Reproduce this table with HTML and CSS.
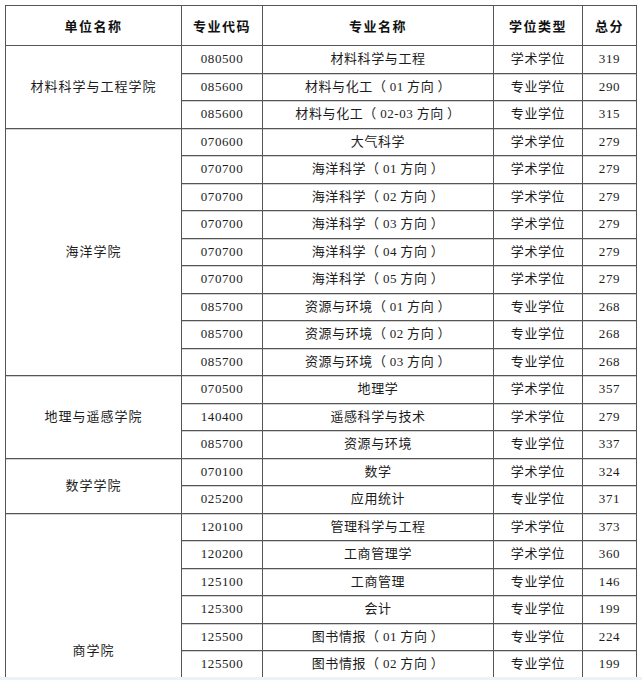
FILE: index.html
```html
<!DOCTYPE html>
<html lang="zh-CN">
<head>
<meta charset="utf-8">
<title>招生专业分数线</title>
<link rel="stylesheet" href="styles.css">
</head>
<body>
<div class="page">
<table class="score-table">
  <colgroup>
    <col class="c-unit"><col class="c-code"><col class="c-name"><col class="c-type"><col class="c-score">
  </colgroup>
  <thead>
    <tr class="head-row">
      <th>单位名称</th><th>专业代码</th><th>专业名称</th><th>学位类型</th><th>总分</th>
    </tr>
  </thead>
  <tbody>
    <tr class="first"><td class="unit" rowspan="3">材料科学与工程学院</td><td class="num">080500</td><td>材料科学与工程</td><td>学术学位</td><td class="num">319</td></tr>
    <tr><td class="num">085600</td><td>材料与化工（&thinsp;01&thinsp;方向&thinsp;）</td><td>专业学位</td><td class="num">290</td></tr>
    <tr><td class="num">085600</td><td>材料与化工（&thinsp;02-03&thinsp;方向&thinsp;）</td><td>专业学位</td><td class="num">315</td></tr>

    <tr><td class="unit" rowspan="9">海洋学院</td><td class="num">070600</td><td>大气科学</td><td>学术学位</td><td class="num">279</td></tr>
    <tr><td class="num">070700</td><td>海洋科学（&thinsp;01&thinsp;方向&thinsp;）</td><td>学术学位</td><td class="num">279</td></tr>
    <tr><td class="num">070700</td><td>海洋科学（&thinsp;02&thinsp;方向&thinsp;）</td><td>学术学位</td><td class="num">279</td></tr>
    <tr><td class="num">070700</td><td>海洋科学（&thinsp;03&thinsp;方向&thinsp;）</td><td>学术学位</td><td class="num">279</td></tr>
    <tr><td class="num">070700</td><td>海洋科学（&thinsp;04&thinsp;方向&thinsp;）</td><td>学术学位</td><td class="num">279</td></tr>
    <tr><td class="num">070700</td><td>海洋科学（&thinsp;05&thinsp;方向&thinsp;）</td><td>学术学位</td><td class="num">279</td></tr>
    <tr><td class="num">085700</td><td>资源与环境（&thinsp;01&thinsp;方向&thinsp;）</td><td>专业学位</td><td class="num">268</td></tr>
    <tr><td class="num">085700</td><td>资源与环境（&thinsp;02&thinsp;方向&thinsp;）</td><td>专业学位</td><td class="num">268</td></tr>
    <tr><td class="num">085700</td><td>资源与环境（&thinsp;03&thinsp;方向&thinsp;）</td><td>专业学位</td><td class="num">268</td></tr>

    <tr><td class="unit" rowspan="3">地理与遥感学院</td><td class="num">070500</td><td>地理学</td><td>学术学位</td><td class="num">357</td></tr>
    <tr><td class="num">140400</td><td>遥感科学与技术</td><td>学术学位</td><td class="num">279</td></tr>
    <tr><td class="num">085700</td><td>资源与环境</td><td>专业学位</td><td class="num">337</td></tr>

    <tr><td class="unit" rowspan="2">数学学院</td><td class="num">070100</td><td>数学</td><td>学术学位</td><td class="num">324</td></tr>
    <tr><td class="num">025200</td><td>应用统计</td><td>专业学位</td><td class="num">371</td></tr>

    <tr><td class="unit" rowspan="10">商学院</td><td class="num">120100</td><td>管理科学与工程</td><td>学术学位</td><td class="num">373</td></tr>
    <tr><td class="num">120200</td><td>工商管理学</td><td>学术学位</td><td class="num">360</td></tr>
    <tr><td class="num">125100</td><td>工商管理</td><td>专业学位</td><td class="num">146</td></tr>
    <tr><td class="num">125300</td><td>会计</td><td>专业学位</td><td class="num">199</td></tr>
    <tr><td class="num">125500</td><td>图书情报（&thinsp;01&thinsp;方向&thinsp;）</td><td>专业学位</td><td class="num">224</td></tr>
    <tr><td class="num">125500</td><td>图书情报（&thinsp;02&thinsp;方向&thinsp;）</td><td>专业学位</td><td class="num">199</td></tr>
    <tr><td class="num"></td><td></td><td></td><td class="num"></td></tr>
    <tr><td class="num"></td><td></td><td></td><td class="num"></td></tr>
    <tr><td class="num"></td><td></td><td></td><td class="num"></td></tr>
    <tr><td class="num"></td><td></td><td></td><td class="num"></td></tr>
  </tbody>
</table>
</div>
</body>
</html>
```

FILE: styles.css
```css
html, body {
  margin: 0;
  padding: 0;
}

body {
  background: #edf2f7;
}

.page {
  height: 677px;
  overflow: hidden;
  background: #ffffff;
  padding: 5px 0 0 5px;
  box-sizing: border-box;
}

.score-table {
  border-collapse: collapse;
  table-layout: fixed;
  width: 631px;
  font-family: "Liberation Serif", "Noto Sans CJK SC", serif;
  font-size: 13px;
  color: #1c1c1c;
}

.c-unit { width: 176px; }
.c-code { width: 81px; }
.c-name { width: 231px; }
.c-type { width: 89px; }
.c-score { width: 54px; }

.score-table th,
.score-table td {
  border: 1px solid #555555;
  padding: 0;
  text-align: center;
  vertical-align: middle;
  white-space: nowrap;
  overflow: hidden;
}

.head-row {
  height: 40px;
}

.score-table th {
  font-family: "Noto Sans CJK SC", sans-serif;
  font-weight: 700;
  font-size: 13px;
  letter-spacing: 1.5px;
  color: #111111;
}

.score-table tbody tr {
  height: 27.5px;
}

.score-table td {
  letter-spacing: 0.6px;
  line-height: 16px;
  box-shadow: inset 0 1px 0 #d2d2d2;
}

.score-table tr.first td {
  box-shadow: none;
}

.score-table td.num {
  letter-spacing: 0.6px;
}

.score-table td.unit {
  letter-spacing: 1px;
}
```
